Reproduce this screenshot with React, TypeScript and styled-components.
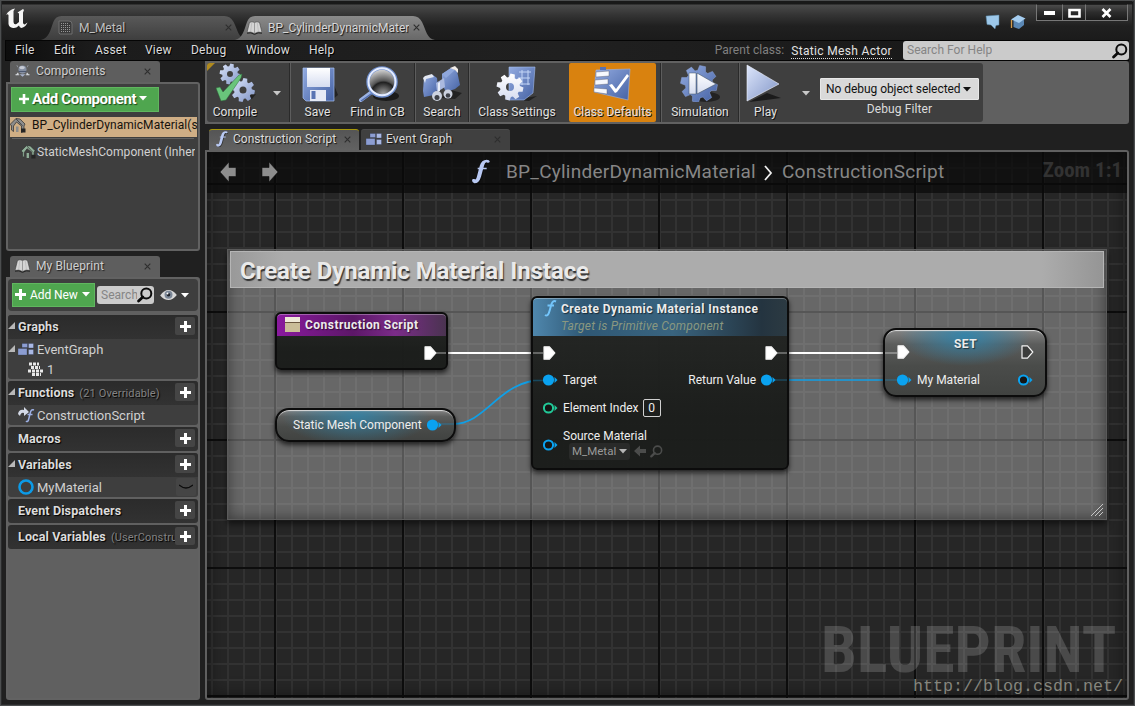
import React from "react";
import styled, { createGlobalStyle, css } from "styled-components";

const Global = createGlobalStyle`
  *, *::before, *::after { box-sizing: border-box; }
  html, body { margin: 0; padding: 0; background: #1f1f1f; }
  body { font-family: Roboto, "Liberation Sans", sans-serif; font-size: 12px; letter-spacing: 0.2px; color: #dcdcdc; overflow: hidden; }
  svg { display: block; flex: none; }
`;

/* ---------- window frame ---------- */

const Window = styled.div`
  width: 1135px;
  height: 706px;
  display: flex;
  flex-direction: column;
  background: #202020;
  border: 1px solid #4c4e4f;
  box-shadow: inset 0 0 0 1px #2b2c2d, inset 0 3px 2px #141414;
  padding: 0 5px 0 4px;
`;

const TitleBar = styled.header`
  height: 39px;
  flex: none;
  display: flex;
  margin: 0 -3px;
  background: linear-gradient(#191919 0 3px, #4a4a4a 4px, #343434 14px, #202020 25px, #1b1b1b 39px);
`;

const Logo = styled.div`
  width: 46px;
  padding: 6px 0 0 3px;
`;

const DocTabs = styled.div`
  display: flex;
  flex: 1;
  align-items: flex-end;
`;

const DocTab = styled.div<{ $active?: boolean }>`
  position: relative;
  width: ${(p) => (p.$active ? 200 : 203)}px;
  height: 24px;
  margin-right: -8px;
  margin-left: ${(p) => (p.$active ? "-1px" : "-7px")};
  display: flex;
  align-items: center;
  padding: 0 ${(p) => (p.$active ? 15 : 12)}px 1px ${(p) => (p.$active ? 12 : 17)}px;
  color: ${(p) => (p.$active ? "#d8d8d8" : "#c0c0c0")};
  text-shadow: 1px 1px 1px #111;
  z-index: ${(p) => (p.$active ? 2 : 1)};
`;

const TabShape = styled.svg`
  position: absolute;
  left: 0;
  top: 0;
  z-index: -1;
`;

const DocTabText = styled.span`
  flex: 1;
  overflow: hidden;
  white-space: nowrap;
  line-height: 18px;
  margin-left: 6px;
  margin-right: 4px;
  letter-spacing: 0;
`;

const TitleIcons = styled.div`
  display: flex;
  gap: 9px;
  padding: 13px 11px 0 0;
`;

const WindowButtons = styled.div`
  display: flex;
  height: 17px;
  margin-top: 3px;
  margin-right: 4px;
`;

const WindowButton = styled.button<{ $w: number }>`
  width: ${(p) => p.$w}px;
  height: 17px;
  padding: 0;
  display: flex;
  align-items: center;
  justify-content: center;
  background: linear-gradient(#4b4b4b, #2c2c2c 50%, #1a1a1a);
  border: 1px solid #777;
  margin-left: -1px;
  border-top-color: #222;
`;

const MenuBar = styled.nav`
  height: 21px;
  flex: none;
  display: flex;
  align-items: center;
  border: 1px solid #050505;
  border-right: 0;
  background: linear-gradient(90deg, #0d0d0d, #1c1c1c 8%, #202020 50%, #151515);
  padding-left: 9px;
`;

const MenuItem = styled.span<{ $w: number }>`
  width: ${(p) => p.$w}px;
  height: 19px;
  line-height: 18px;
  flex: none;
  text-shadow: 1px 1px 0 #000;
`;

const ParentClass = styled.span`
  margin-left: auto;
  height: 19px;
  line-height: 18px;
  color: #808080;
  letter-spacing: 0.05px;
`;

const ParentLink = styled.span`
  margin: 1px 11px 0 7px;
  line-height: 14px;
  color: #e2e2e2;
  border-bottom: 1px dotted #ddd;
  letter-spacing: 0.33px;
`;

const SearchBox = styled.div<{ $w: number; $h: number }>`
  width: ${(p) => p.$w}px;
  height: ${(p) => p.$h}px;
  flex: none;
  display: flex;
  align-items: center;
  justify-content: space-between;
  padding: 0 1px 0 4px;
  color: #858585;
  background: #cbcbcb;
  border-radius: 3px;
  overflow: hidden;
  letter-spacing: 0.03px;
`;

const SearchHint = styled.span`
  overflow: hidden;
  white-space: nowrap;
  padding-bottom: 1px;
`;

const Main = styled.main`
  display: flex;
  flex: 1;
  min-height: 0;
  padding: 0 0 5px 1px;
`;

/* ---------- side column ---------- */

const SideColumn = styled.aside`
  width: 194px;
  flex: none;
  display: flex;
  flex-direction: column;
  margin-right: 5px;
`;

const PanelTab = styled.div<{ $top?: number }>`
  width: 150px;
  height: 21px;
  margin: ${(p) => p.$top ?? 0}px 0 0 4px;
  flex: none;
  display: flex;
  align-items: center;
  padding: 0 9px 1px 5px;
  gap: 6px;
  background: #5e5e5e;
  border-radius: 3px 3px 0 0;
  color: #d0d0d0;
  text-shadow: 1px 1px 1px #222;
  letter-spacing: 0.1px;
`;

const Grow = styled.span`
  flex: 1;
`;

const Panel = styled.section<{ $h?: number; $fill?: string }>`
  ${(p) => (p.$h ? css`height: ${p.$h}px; flex: none;` : css`flex: 1;`)}
  display: flex;
  flex-direction: column;
  border: 2px solid #626262;
  border-radius: 0 3px 3px 3px;
  background: ${(p) => p.$fill ?? "#3e3e3e"};
  overflow: hidden;
`;

const AddComponent = styled.button`
  width: 148px;
  height: 25px;
  flex: none;
  margin: 3px 0 0 3px;
  padding: 0 0 2px 7px;
  display: flex;
  align-items: center;
  gap: 3px;
  background: #4fa64f;
  border: 1px solid #60b65f;
  color: #fff;
  font: bold 15px Roboto, sans-serif;
  letter-spacing: -0.35px;
  text-shadow: 1px 1px 1px #1c4a1c;
  white-space: nowrap;
`;

const TreeRow = styled.div<{ $selected?: boolean }>`
  height: 20px;
  flex: none;
  display: flex;
  align-items: center;
  white-space: nowrap;
  overflow: hidden;
  padding-bottom: ${(p) => (p.$selected ? 4 : 2)}px;
  margin: ${(p) => (p.$selected ? "5px 1px 0 2px" : "4px 3px 0 13px")};
  gap: ${(p) => (p.$selected ? 6 : 1)}px;
  background: ${(p) => (p.$selected ? "#cfae85" : "transparent")};
  color: ${(p) => (p.$selected ? "#16120d" : "#d2d2d2")};
  letter-spacing: ${(p) => (p.$selected ? "0.06px" : "0.08px")};
`;

const TreeDivider = styled.div`
  height: 1px;
  flex: none;
  margin: 1px 4px 0;
  background: #626262;
`;

const BlueprintTools = styled.div`
  height: 32px;
  flex: none;
  margin-bottom: 4px;
  display: flex;
  align-items: center;
  padding-left: 4px;
  background: #3e3e3e;
  border-radius: 4px;
`;

const AddNew = styled.button`
  width: 83px;
  height: 24px;
  margin-right: 2px;
  padding: 0 0 1px 2px;
  display: flex;
  align-items: center;
  gap: 4px;
  background: #4fa64f;
  border: 1px solid #60b65f;
  color: #fff;
  font: 12px Roboto, sans-serif;
  letter-spacing: -0.1px;
  white-space: nowrap;
`;

const Eye = styled.span`
  display: flex;
  align-items: center;
  gap: 4px;
  margin-left: 6px;
`;

const Category = styled.section`
  flex: none;
  margin-bottom: 2px;
  background: #3e3e3e;
  border-radius: 3px;
  overflow: hidden;
`;

const CategoryHead = styled.div`
  height: 24px;
  display: flex;
  align-items: center;
  background: linear-gradient(#2b2b2b, #323232);
  padding-right: 3px;
  padding-bottom: 2px;
  font-weight: bold;
  font-size: 12.5px;
  letter-spacing: 0.12px;
  color: #dcdcdc;
  text-shadow: 1px 1px 1px #000;
`;

const Toggle = styled.span`
  width: 10px;
  flex: none;
`;

const CategoryNote = styled.span`
  flex: 1;
  min-width: 0;
  overflow: hidden;
  white-space: nowrap;
  margin-left: 5px;
  font-weight: normal;
  font-size: 11px;
  letter-spacing: 0.13px;
  color: #838383;
  line-height: 16px;
  padding-top: 3px;
`;

const PlusButton = styled.span`
  width: 20px;
  height: 18px;
  flex: none;
  display: flex;
  align-items: center;
  justify-content: center;
  background: #454545;
  border-radius: 2px;
`;

const CategoryItem = styled.div<{ $h: number; $indent?: number }>`
  height: ${(p) => p.$h}px;
  display: flex;
  align-items: center;
  padding-left: ${(p) => p.$indent ?? 0}px;
  padding-right: 2px;
  font-size: 13px;
  letter-spacing: 0;
  color: #d0d0d0;
`;

const ItemIcon = styled.span`
  width: 19px;
  flex: none;
`;

/* ---------- editor column ---------- */

const Editor = styled.div`
  flex: 1;
  min-width: 0;
  display: flex;
  flex-direction: column;
`;

const ToolbarFrame = styled.div`
  height: 63px;
  flex: none;
  display: flex;
  border: 2px solid #616161;
  background: #606060;
  border-radius: 0 3px 3px 0;
`;

const Toolbar = styled.div`
  position: relative;
  width: 776px;
  display: flex;
  background: #3f3f3f;
  border-radius: 3px;
  overflow: hidden;
`;

const Corner = styled.svg`
  position: absolute;
  left: -1px;
  top: -1px;
`;

const Tool = styled.div<{ $w: number; $r?: number; $active?: boolean }>`
  width: ${(p) => p.$w}px;
  margin-right: ${(p) => p.$r ?? 0}px;
  flex: none;
  display: flex;
  flex-direction: column;
  align-items: center;
  background: ${(p) => (p.$active ? "#d9820f" : "transparent")};
  border-radius: 2px;
  color: #e2e2e2;
  text-shadow: 1px 1px 0 #111;
  white-space: nowrap;
  letter-spacing: 0.07px;
`;

const ToolLabel = styled.span`
  line-height: 16px;
  margin-top: 2px;
`;

const Divider = styled.div<{ $l?: number; $r?: number }>`
  width: 2px;
  flex: none;
  margin: 0 ${(p) => p.$r ?? 0}px 0 ${(p) => p.$l ?? 0}px;
  background: #5d5d5d;
  border-left: 1px solid #2a2a2a;
`;

const Drop = styled.div<{ $l: number; $r: number }>`
  padding-top: 28px;
  margin: 0 ${(p) => p.$r}px 0 ${(p) => p.$l}px;
`;

const DebugFilter = styled.div`
  display: flex;
  flex-direction: column;
  align-items: center;
  padding-top: 15px;
  letter-spacing: 0.1px;
`;

const DebugCaption = styled.span`
  line-height: 16px;
  margin-top: 1px;
`;

const DebugSelect = styled.div`
  width: 159px;
  height: 22px;
  display: flex;
  align-items: center;
  padding-left: 5px;
  gap: 2px;
  background: #d9d9d9;
  border: 1px solid #e8e8e8;
  border-radius: 1px;
  color: #111;
  white-space: nowrap;
  letter-spacing: -0.05px;
`;

const GraphTabs = styled.div`
  height: 21px;
  margin-top: 5px;
  flex: none;
  display: flex;
  gap: 2px;
  padding-left: 4px;
`;

const GraphTab = styled.div<{ $active?: boolean; $w: number }>`
  width: ${(p) => p.$w}px;
  display: flex;
  align-items: center;
  padding: 0 9px 2px 5px;
  gap: 4px;
  border-top: 1px solid ${(p) => (p.$active ? "#a8980a" : "#4a4a4a")};
  border-radius: 3px 3px 0 0;
  background: ${(p) => (p.$active ? "linear-gradient(#555, #626262)" : "#404040")};
  letter-spacing: ${(p) => (p.$active ? "0.02px" : "0.2px")};
  text-shadow: 1px 1px 1px #111;
  white-space: nowrap;
`;

const Graph = styled.section`
  position: relative;
  flex: 1;
  border: 2px solid #606060;
  border-radius: 0 3px 3px 3px;
  overflow: hidden;
  background-color: #262626;
  background-image:
    linear-gradient(90deg, #0d0d0d 2px, transparent 2px),
    linear-gradient(#0d0d0d 2px, transparent 2px),
    linear-gradient(90deg, #323232 2px, transparent 2px),
    linear-gradient(#323232 2px, transparent 2px);
  background-size: 128px 128px, 128px 128px, 16px 16px, 16px 16px;
  background-position: 67px 31px, 67px 31px, 4px 15px, 4px 15px;
`;

const Vignette = styled.div`
  position: absolute;
  inset: 0;
  box-shadow: inset 0 0 18px #0008;
  pointer-events: none;
`;

const GraphHeader = styled.div`
  position: relative;
  height: 41px;
  display: flex;
  align-items: center;
  padding: 0 5px 2px 12px;
  background: #0a0a0ab8;
  z-index: 2;
`;

const NavArrows = styled.div`
  display: flex;
  gap: 24px;
  width: 253px;
`;

const Crumb = styled.span`
  font-size: 19px;
  line-height: 22px;
  letter-spacing: 0.25px;
  color: #868686;
  white-space: nowrap;
`;

const ZoomText = styled.span`
  margin-left: auto;
  margin-top: -3px;
  font-size: 21px;
  line-height: 24px;
  font-weight: bold;
  font-stretch: condensed;
  letter-spacing: 0;
  color: #323232;
  white-space: nowrap;
`;

/* ---------- graph canvas ---------- */

const CommentBox = styled.div`
  position: absolute;
  left: 20px;
  top: 97px;
  width: 880px;
  height: 271px;
  padding: 2px;
  background: #ffffff4d;
  box-shadow: inset 0 0 14px #0007, 0 4px 6px #0008;
  border: 1px solid #5b5b5b;
`;

const CommentTitle = styled.div`
  height: 37px;
  margin-top: -1px;
  padding: 0 0 0 9px;
  line-height: 39px;
  font-size: 24px;
  font-weight: bold;
  letter-spacing: -0.07px;
  color: #eaeaea;
  text-shadow: 1px 2px 1px #333;
  background: linear-gradient(90deg, #999, #acacac 6%, #acacac 93%, #959595);
  border: 1px solid #b5b5b5;
`;

const Resize = styled.svg`
  position: absolute;
  right: 2px;
  bottom: 2px;
`;

const Wires = styled.svg`
  position: absolute;
  left: 0;
  top: 0;
`;

const Node = styled.div<{ $x: number; $y: number; $w: number; $h: number; $round?: number }>`
  position: absolute;
  left: ${(p) => p.$x}px;
  top: ${(p) => p.$y}px;
  width: ${(p) => p.$w}px;
  height: ${(p) => p.$h}px;
  border: 2px solid #0c0c0c;
  border-radius: ${(p) => p.$round ?? 6}px;
  background: linear-gradient(#232523f2, #191b19f5 70%);
  box-shadow: 0 3px 5px #000a;
  overflow: hidden;
  color: #eee;
`;

const GlossNode = styled(Node)<{ $glow: string }>`
  background:
    ${(p) => p.$glow},
    linear-gradient(#858585, #5c5d5c 22%, #4a4c4a 55%, #414341);
  box-shadow: inset 0 2px 1px -1px #ddd, 0 3px 5px #000a;
`;

const NodeHead = styled.div<{ $h: number; $bg: string }>`
  height: ${(p) => p.$h}px;
  display: flex;
  background: ${(p) => p.$bg};
  box-shadow: inset 0 1px 0 #ffffff50;
  border-radius: 4px 4px 0 0;
`;

const NodeTitle = styled.span`
  font-weight: bold;
  line-height: 22px;
  font-size: 12px;
  letter-spacing: 0.47px;
  color: #ececec;
  white-space: nowrap;
  text-shadow: 1px 1px 1px #0008;
`;

const NodeSub = styled.div`
  font-style: italic;
  line-height: 14px;
  margin-top: -1px;
  letter-spacing: 0.2px;
  color: #8a9880;
`;

const NodeTitles = styled.div`
  display: flex;
  flex-direction: column;
`;

const Pins = styled.div<{ $h: number; $l?: number; $r?: number }>`
  height: ${(p) => p.$h}px;
  display: flex;
  align-items: center;
  justify-content: space-between;
  padding: 0 ${(p) => p.$r ?? 10}px 0 ${(p) => p.$l ?? 10}px;
  white-space: nowrap;
  letter-spacing: 0;
`;

const SetHead = styled(Pins)`
  & > span {
    margin-bottom: 17px;
  }
`;

const PinGroup = styled.span`
  display: flex;
  align-items: center;
  gap: 5px;
`;

const IndexValue = styled.span`
  width: 18px;
  height: 18px;
  margin-left: -1px;
  border: 1px solid #d0d0d0;
  border-radius: 2px;
  line-height: 16px;
  text-align: center;
`;

const AssetPicker = styled.span`
  display: flex;
  align-items: center;
  gap: 4px;
  margin: -1px 0 0 6px;
`;

const AssetValue = styled.span`
  display: flex;
  align-items: center;
  gap: 3px;
  width: 61px;
  height: 17px;
  padding-left: 3px;
  font-size: 11.5px;
  background: #292a29;
  border-radius: 3px;
  color: #9a9a9a;
`;

const SourcePin = styled.div`
  display: flex;
  flex-direction: column;
  line-height: 16px;
  margin-top: -2px;
`;

const Watermark = styled.div`
  position: absolute;
  right: 11px;
  bottom: 9px;
  font-size: 65px;
  line-height: 78px;
  font-weight: bold;
  font-stretch: condensed;
  color: #ffffff2b;
  transform: scaleX(0.983);
  transform-origin: right;
  letter-spacing: 0;
`;

const SiteUrl = styled.div`
  position: absolute;
  right: 4px;
  bottom: -1px;
  font: 16.67px/24px "Liberation Mono", monospace;
  letter-spacing: 0;
  color: #85857d;
`;

/* ---------- icons ---------- */

const Cross = ({ c = "#2e2e2e" }: { c?: string }) => (
  <svg width="7" height="7" viewBox="0 0 7 7"><path d="M.7.7 6.3 6.3M6.3.7.7 6.3" stroke={c} strokeWidth="1.1" /></svg>
);
const Caret = ({ c = "#fff", w = 8 }: { c?: string; w?: number }) => (
  <svg width={w} height={w / 2 + 1} viewBox="0 0 8 5"><path d="M0 0h8L4 4.5z" fill={c} /></svg>
);
const Plus = ({ s = 11, t = 3 }: { s?: number; t?: number }) => (
  <svg width={s} height={s} viewBox={`0 0 ${s} ${s}`}><path d={`M${s / 2} 0v${s}M0 ${s / 2}h${s}`} stroke="#fff" strokeWidth={t} /></svg>
);
const Magnifier = ({ c = "#0b0b0b", s = 16 }: { c?: string; s?: number }) => (
  <svg width={s} height={s} viewBox="0 0 16 16"><circle cx="9.3" cy="6.4" r="5" fill="none" stroke={c} strokeWidth="2" /><path d="M5.8 10 1.6 14" stroke={c} strokeWidth="2.8" strokeLinecap="round" /></svg>
);
const Expander = () => (
  <svg width="8" height="8" viewBox="0 0 8 8"><path d="M7 0v7H0z" fill="#b8b8b8" /></svg>
);
const Book = () => (
  <svg width="15" height="14" viewBox="0 0 15 14"><path d="M2.5 1.5Q5 0 7.5 1.5 10 0 12.5 1.5L15 11.5Q11 10 7.5 12.5 4 10 0 11.5z" fill="#d4d4d4" stroke="#333" strokeWidth=".5" /><path d="M7.500 2v10" stroke="#8a8a8a" strokeWidth=".8" /><path d="M4.8 1.5 3.7 10M10.2 1.5 11.4 10" stroke="#b0b0b0" strokeWidth=".6" /><path d="M0 12.2Q4 11 7.5 13.4 11 11 15 12.2" stroke="#222" fill="none" /></svg>
);
const MaterialIcon = () => (
  <svg width="15" height="16" viewBox="0 0 15 16"><path d="M1 1h10q3 0 3 3v10H2l-1-1z" fill="#3a3a3a" stroke="#6f6f6f" /><path d="M3 3.500h8M3 5.500h10M3 7.500h10M3 9.500h10M3 11.500h10" stroke="#989898" strokeDasharray="1 1" /></svg>
);
const ComponentsIcon = () => (
  <svg width="15" height="14" viewBox="0 0 16 14"><circle cx="8" cy="5.500" r="4.300" fill="#8690a3" /><path d="M3 3 2 .8M13 3 14 .8" stroke="#8f949c" /><path d="M3.500 9 1.500 11.500M12.500 9 14.500 11.500M.5 11h4M11.500 11h4" stroke="#d4d7dd" strokeWidth="1.300" /><ellipse cx="7.500" cy="3.300" rx="3" ry="1.700" fill="#c6cbd5" /><path d="M5 10.500 8 13l3-2.500z" fill="#a6b2cc" /><path d="M4 7.500h8" stroke="#46536c" /></svg>
);
const House = ({ c, s = 16 }: { c: string; s?: number }) => (
  <svg width={s} height={s - 1} viewBox="0 0 16 15"><path d="M0 6.5 6 .5l4 .5 5 5-1 2v5l-2.500 1.500V8L6.500 4 3.500 8v5.500L1.500 12V7.500z" fill={c} stroke="#2c2c2c" strokeWidth=".7" /><path d="m6 .8 6.500 7" stroke="#333" strokeWidth=".8" /><path d="M6 8.500h2.500v5.500H6z" fill={c} /><path d="M11 10.500h4.500v4H11z" fill="#252525" /></svg>
);
const GraphIcon = () => (
  <svg width="16" height="13" viewBox="0 0 16 13"><g stroke="#26304a" strokeWidth=".3"><path d="M4 .5h5.500v4H4zM0 5.500h9v6.500H0z" fill="#8c9dd2" /><path d="M10.500.5h5v4.500h-5zM10.500 6.500h5v5h-5z" fill="#a9b8e4" /></g></svg>
);
const NodesIcon = () => (
  <svg width="15" height="15" viewBox="0 0 15 15"><path d="M1 2h10M3 5.500h9M0 9h15M4 12.500h9" stroke="#e8e8e8" strokeWidth="2.800" strokeDasharray="3 1" /></svg>
);
const EyeIcon = () => (
  <svg width="17" height="12" viewBox="0 0 17 12"><path d="M.2 6.500Q4 1 8.500 1t8.300 5Q13 11 8.500 11T.2 6.500z" fill="#d8d8d8" /><circle cx="8.500" cy="5.800" r="4" fill="#7b8797" /><circle cx="8.500" cy="5.800" r="1.800" fill="#20242c" /><circle cx="7.500" cy="4.500" r="1" fill="#fff" /></svg>
);

const FIcon = ({ w, h, c = "#b9c9f3" }: { w: number; h: number; c?: string }) => (
  <svg width={w} height={h} viewBox="0 0 19 26">
    <path d="M1 23.500q5 2.500 7-5L11.500 6Q13 .5 18 2.500" fill="none" stroke="#0c0c0c" strokeWidth="3" transform="translate(1 1)" opacity=".6" />
    <path d="M0 22q.5-1.500 2.500-1 1.500 1.500 2.500-2L8.200 7Q10 .5 15.500.5q3 .2 3.300 2-.6 1.700-2.500 1.200-2.200-1.500-3.500 2.800L9.500 18.500Q7.500 25.500 2.500 25.500 0 25 0 22z" fill={c} />
    <path d="M6 9.800h9.500" stroke={c} strokeWidth="1.600" />
  </svg>
);

const TabIcon = styled.span`
  width: 16px;
  margin-right: 1px;
  padding-left: 2px;
`;

const CrumbIcon = styled.span`
  width: 34px;
`;

const gearPath = (cx: number, cy: number, r: number, n = 8) => {
  const pts: string[] = [];
  for (let i = 0; i < n; i++) {
    const a = (i / n) * Math.PI * 2 + 0.2;
    const w = Math.PI / n;
    [[-0.75, 0.74], [-0.42, 1], [0.42, 1], [0.75, 0.74]].forEach(([d, k]) => {
      pts.push(`${(cx + Math.cos(a + d * w) * r * k).toFixed(2)} ${(cy + Math.sin(a + d * w) * r * k).toFixed(2)}`);
    });
  }
  return `M${pts.join("L")}Z`;
};

const Defs = () => (
  <defs>
    <linearGradient id="steel" x1="0" y1="0" x2="1" y2="1"><stop offset="0" stopColor="#dde6fb" /><stop offset="1" stopColor="#8094c6" /></linearGradient>
    <linearGradient id="blue" x1="0" y1="0" x2="1" y2="1"><stop offset="0" stopColor="#93abe0" /><stop offset="1" stopColor="#4562a4" /></linearGradient>
    <linearGradient id="paper" x1="0" y1="0" x2="0" y2="1"><stop offset="0" stopColor="#fff" /><stop offset="1" stopColor="#d5dcf0" /></linearGradient>
    <radialGradient id="lens" cx=".55" cy=".95" r="1"><stop offset="0" stopColor="#aaa" /><stop offset=".44" stopColor="#202020" /><stop offset=".5" stopColor="#555" /><stop offset="1" stopColor="#f4f4f4" /></radialGradient>
  </defs>
);

const Art = ({ children }: { children: React.ReactNode }) => (
  <svg width="42" height="39" viewBox="0 0 42 39"><Defs />{children}</svg>
);
const CompileArt = () => (
  <Art>
    <path d="M24 34 38 36 42 31z" fill="#222" />
    <path fillRule="evenodd" d={gearPath(16, 11, 10.5) + "M19 11a3 3 0 1 0-6 0a3 3 0 1 0 6 0Z"} fill="url(#steel)" />
    <path fillRule="evenodd" d={gearPath(29, 27, 12) + "M32.500 27a3.500 3.500 0 1 0-7 0a3.500 3.500 0 1 0 7 0Z"} fill="url(#steel)" />
    <path d="m2 25 4-1 3 5L25 12l3-1-1 4L12 37l-5 1z" fill="#69c47b" stroke="#2c6c3a" strokeWidth=".5" />
  </Art>
);
const SaveArt = () => (
  <Art><path d="M36 36 41 32 37 22z" fill="#222" /><path d="M6 5h31v33H9l-3-3z" fill="url(#blue)" stroke="#a8c0f0" strokeWidth=".7" /><path d="M10 5h23v19H10z" fill="url(#paper)" /><path d="M13 27h16v11H13z" fill="#e6eaf5" /><path d="M14.500 28h4v8h-4z" fill="#5a75b3" /></Art>
);
const FindArt = () => (
  <Art><ellipse cx="29" cy="33" rx="13" ry="5" fill="#1b1b1b" /><path d="M16 28 4 37" stroke="#9bb2e2" strokeWidth="4" strokeLinecap="round" /><path d="m4 38 13-9" stroke="#526eaf" strokeWidth="1.500" /><circle cx="25" cy="19" r="14" fill="url(#lens)" stroke="#6e8dcb" strokeWidth="3.500" /><circle cx="25" cy="18.700" r="13.500" fill="none" stroke="#e6edff" strokeWidth="2" /></Art>
);
const BinocularArt = () => (
  <Art><path d="M20 35 34 36 41 30 30 27z" fill="#222" /><path d="m3 14 9-2 4 3 1 10-4 7-10 2-1-6z" fill="url(#blue)" /><path d="m2 15 2-2 7-2 2 3-8 2-1 4z" fill="#e4e8f2" /><path d="m21 11 9-6 6 3 3 14-5 4-9 3-4-8z" fill="url(#blue)" /><path d="m21 11 9-6 4 2-9 8z" fill="#8fa7dc" /><path d="m29 5 5-2 3 3v4l-3-3z" fill="#f1ece8" /><path d="m15 20 8-5 1 9-8 5z" fill="#aab9df" /><path d="m17 20 2-1v9l-2 1z" fill="#e8edf8" /><circle cx="16" cy="33" r="5" fill="#ccd2df" /><circle cx="16" cy="34.500" r="2.500" fill="#3e4148" /><circle cx="27" cy="31" r="4.500" fill="#ccd2df" /><circle cx="27" cy="32.500" r="2.300" fill="#3e4148" /></Art>
);
const SettingsArt = () => (
  <Art><path d="M17 37 33 38 41 33z" fill="#222" /><path d="m13 4 26 0-2 26-9 7-15 0z" fill="url(#blue)" stroke="#a2bced" strokeWidth=".6" /><path d="M23 9h12M22 15h12M20 21h14M26 7v15M32 7v15" stroke="#c3d5f6" /><path fillRule="evenodd" d={gearPath(14, 24, 13.500) + "M18 24a4 4 0 1 0-8 0a4 4 0 1 0 8 0Z"} fill="url(#paper)" /></Art>
);
const DefaultsArt = () => (
  <Art><path d="m4 7 34-1-2 31-34-8z" fill="url(#blue)" stroke="#9cb2e0" strokeWidth=".6" /><path d="M8 4h6v3H8z" fill="#5671b3" /><path d="m4 9 13-1v5L4 14zM3 17l13-1v5L3 22zM2 25l13 1v5L2 29z" fill="#f6f8fd" stroke="#556" strokeWidth=".4" /><path d="m17 22 3-1 4 5 11-15 2 2-12 16-2 1z" fill="#fff" /></Art>
);
const SimulationArt = () => (
  <Art><ellipse cx="27" cy="34" rx="14" ry="5" fill="#222" /><path d={gearPath(20, 21, 18.500)} fill="url(#blue)" stroke="#8da5da" strokeWidth=".5" /><path d="M10 10h7v21h-7z" fill="url(#paper)" stroke="#456" strokeWidth=".5" /><path d="m18 10 19 11-19 10z" fill="url(#paper)" stroke="#456" strokeWidth=".6" /></Art>
);
const PlayArt = () => (
  <Art><path d="M4 39 36 35 22 30z" fill="#1b1b1b" /><path d="m2 2 32 19L2 38z" fill="url(#steel)" stroke="#f2f5ff" strokeWidth=".6" /></Art>
);

const ExecPin = ({ hollow }: { hollow?: boolean }) => (
  <svg width="13" height="14" viewBox="0 0 13 14"><path d="M1 .8h5.500L11.800 7 6.500 13.200H1z" fill={hollow ? "#3c3d3c" : "#fff"} stroke="#f3f3f3" strokeLinejoin="round" strokeWidth="1.200" /></svg>
);
const DataPin = ({ c = "#0aa2f0", hollow }: { c?: string; hollow?: boolean }) => (
  <svg width="15" height="12" viewBox="0 0 15 12"><path d="m11.500 3 3 3-3 3z" fill={c} /><circle cx="5.500" cy="6" r={hollow ? 4.600 : 5.600} fill={hollow ? "#151615" : c} stroke={c} strokeWidth={hollow ? 2 : 0} /></svg>
);
const NavArrow = ({ flip }: { flip?: boolean }) => (
  <svg width="18" height="22" viewBox="0 0 18 22"><path transform={flip ? "translate(18 0) scale(-1 1)" : undefined} d="M1 11 10 1v5.500h7v9h-7V21z" fill="#8d8d8d" stroke="#111" strokeWidth=".6" /></svg>
);

const docShape = "M0 24C8 22 9 14 12 6Q14 0 20 0H178Q184 0 187 6C191 14 192 23 200 24Z";
const DocShape = ({ active }: { active?: boolean }) => (
  <TabShape width={active ? 200 : 206} height="24" viewBox="0 0 200 24" preserveAspectRatio="none">
    <defs><linearGradient id={active ? "ta" : "tb"} x1="0" y1="0" x2="0" y2="1"><stop offset="0" stopColor={active ? "#8a8a8a" : "#595959"} /><stop offset="1" stopColor={active ? "#686868" : "#3e3e3e"} /></linearGradient></defs>
    <path d={docShape} fill={`url(#${active ? "ta" : "tb"})`} />
  </TabShape>
);

const menu: [string, number][] = [["File", 39], ["Edit", 41], ["Asset", 50], ["View", 46], ["Debug", 55], ["Window", 63], ["Help", 40]];

const Head = ({ name, note, open }: { name: string; note?: string; open?: boolean }) => (
  <CategoryHead>
    <Toggle>{open && <Expander />}</Toggle>
    {name}
    <CategoryNote>{note}</CategoryNote>
    <PlusButton><Plus /></PlusButton>
  </CategoryHead>
);

export default function App() {
  return (
    <>
      <Global />
      <Window>
        <TitleBar>
          <Logo>
            <svg width="24" height="22" viewBox="0 0 24 22"><path d="M1 8Q4 2.500 10 1.500L8.500 4v11q.3 3 3 2l2.500-2V6.500L12.500 5.500 18 2l1 1-1 2.500v10.500q1 2.500 3 .5l1.500-1q-2 4.500-6 5.500-2-.5-2.500-2.500-3 3-6 2.500-4-.5-4.500-4V8Q2.500 6.500 1 8z" fill="#f5f5f5" /></svg>
          </Logo>
          <DocTabs>
            <DocTab>
              <DocShape />
              <MaterialIcon />
              <DocTabText>M_Metal</DocTabText>
              <Cross />
            </DocTab>
            <DocTab $active>
              <DocShape active />
              <Book />
              <DocTabText>BP_CylinderDynamicMaterial</DocTabText>
              <Cross />
            </DocTab>
          </DocTabs>
          <TitleIcons>
            <svg width="16" height="16" viewBox="0 0 16 16"><path d="M1 2 14 1v10l-3 .5-1 3.500-4-4-4-.5z" fill="#9dc8ea" stroke="#55809f" strokeWidth=".5" /></svg>
            <svg width="16" height="16" viewBox="0 0 16 16"><path d="M3.500 7v6L9 15l5-4V6z" fill="#5b88b5" /><path d="M1 5.500 8 1l7.500 3.500L9 9z" fill="#a5cdf0" /><path d="M1.500 6v8" stroke="#d29b4d" strokeWidth="1.300" /></svg>
          </TitleIcons>
          <WindowButtons>
            <WindowButton $w={27}><svg width="11" height="4" viewBox="0 0 11 4"><path d="M0 0h11v4H0z" fill="#fff" /></svg></WindowButton>
            <WindowButton $w={24}><svg width="13" height="10" viewBox="0 0 13 10"><path d="M1.500 2h10v6.500h-10z" fill="none" stroke="#fff" strokeWidth="2.600" /></svg></WindowButton>
            <WindowButton $w={43}><svg width="11" height="10" viewBox="0 0 11 10"><path d="m1.500 1 8 8m0-8-8 8" stroke="#fff" strokeWidth="2.600" /></svg></WindowButton>
          </WindowButtons>
        </TitleBar>

        <MenuBar>
          {menu.map(([name, w]) => <MenuItem key={name} $w={w}>{name}</MenuItem>)}
          <ParentClass>Parent class:</ParentClass>
          <ParentLink>Static Mesh Actor</ParentLink>
          <SearchBox $w={226} $h={19}><SearchHint>Search For Help</SearchHint><Magnifier /></SearchBox>
        </MenuBar>

        <Main>
          <SideColumn>
            <PanelTab><ComponentsIcon />Components<Grow /><Cross /></PanelTab>
            <Panel $h={169}>
              <AddComponent><Plus s={10} t={2.6} />Add Component<Caret /></AddComponent>
              <TreeRow $selected><House c="#8c8c8c" />BP_CylinderDynamicMaterial(self)</TreeRow>
              <TreeDivider />
              <TreeRow><House c="#8faf98" s={15} />StaticMeshComponent (Inherited)</TreeRow>
            </Panel>

            <PanelTab $top={5}><Book />My Blueprint<Grow /><Cross /></PanelTab>
            <Panel $fill="#606060">
              <BlueprintTools>
                <AddNew><Plus />Add New<Caret /></AddNew>
                <SearchBox $w={57} $h={18}><SearchHint>Search</SearchHint><Magnifier /></SearchBox>
                <Eye><EyeIcon /><Caret /></Eye>
              </BlueprintTools>
              <Category>
                <Head name="Graphs" open />
                <CategoryItem $h={20}><Toggle><Expander /></Toggle><ItemIcon><GraphIcon /></ItemIcon>EventGraph</CategoryItem>
                <CategoryItem $h={20} $indent={20}><ItemIcon><NodesIcon /></ItemIcon>1</CategoryItem>
              </Category>
              <Category>
                <Head name="Functions" note="(21 Overridable)" open />
                <CategoryItem $h={20} $indent={10}>
                  <ItemIcon><svg width="17" height="16" viewBox="0 0 17 16"><path d="M0 7Q1 2 6 3V0l5 5-5 4V6Q3 5 2 9z" fill="#d3d9e6" /><path d="M8 14q2 2 3-3l1.500-6Q13.500 2 16 3M9.500 7.500h5" fill="none" stroke="#9db0e4" strokeWidth="1.500" /></svg></ItemIcon>
                  ConstructionScript
                </CategoryItem>
              </Category>
              <Category><Head name="Macros" /></Category>
              <Category>
                <Head name="Variables" open />
                <CategoryItem $h={20} $indent={10}>
                  <ItemIcon><svg width="16" height="16" viewBox="0 0 16 16"><circle cx="8" cy="8" r="6.500" fill="none" stroke="#0c9be8" strokeWidth="2.600" /></svg></ItemIcon>
                  MyMaterial<Grow />
                  <PlusButton><svg width="14" height="6" viewBox="0 0 14 6"><path d="M0 1q7 6 14 0" fill="none" stroke="#0c0c0c" strokeWidth="1.300" /></svg></PlusButton>
                </CategoryItem>
              </Category>
              <Category><Head name="Event Dispatchers" /></Category>
              <Category><Head name="Local Variables" note="(UserConstructionScript)" /></Category>
            </Panel>
          </SideColumn>

          <Editor>
            <ToolbarFrame>
              <Toolbar>
                <Corner width="10" height="10" viewBox="0 0 10 10"><path d="M0 0h10L0 10z" fill="#b08a1e" /></Corner>
                <Tool $w={56}><CompileArt /><ToolLabel>Compile</ToolLabel></Tool>
                <Drop $l={10} $r={8}><Caret c="#c8c8c8" /></Drop>
                <Divider $r={3} />
                <Tool $w={47}><SaveArt /><ToolLabel>Save</ToolLabel></Tool>
                <Tool $w={73}><FindArt /><ToolLabel>Find in CB</ToolLabel></Tool>
                <Divider />
                <Tool $w={52}><BinocularArt /><ToolLabel>Search</ToolLabel></Tool>
                <Divider />
                <Tool $w={94} $r={5}><SettingsArt /><ToolLabel>Class Settings</ToolLabel></Tool>
                <Tool $w={87} $active><DefaultsArt /><ToolLabel>Class Defaults</ToolLabel></Tool>
                <Divider $l={4} />
                <Tool $w={76}><SimulationArt /><ToolLabel>Simulation</ToolLabel></Tool>
                <Divider />
                <Tool $w={51}><PlayArt /><ToolLabel>Play</ToolLabel></Tool>
                <Drop $l={11} $r={10}><Caret c="#c8c8c8" /></Drop>
                <DebugFilter>
                  <DebugSelect>No debug object selected<Caret c="#111" /></DebugSelect>
                  <DebugCaption>Debug Filter</DebugCaption>
                </DebugFilter>
              </Toolbar>
            </ToolbarFrame>

            <GraphTabs>
              <GraphTab $active $w={150}><TabIcon><FIcon w={12} h={16} /></TabIcon>Construction Script<Grow /><Cross /></GraphTab>
              <GraphTab $w={149}><GraphIcon />Event Graph<Grow /><Cross /></GraphTab>
            </GraphTabs>

            <Graph>
              <CommentBox>
                <CommentTitle>Create Dynamic Material Instace</CommentTitle>
                <Resize width="14" height="14" viewBox="0 0 14 14"><path d="M1 13 13 1M5 13l8-8M9 13l4-4" stroke="#c6c6c6" /></Resize>
              </CommentBox>

              <Watermark>BLUEPRINT</Watermark>
              <Vignette />

              <Wires width="920" height="546" viewBox="0 0 920 546" fill="none">
                <path d="M238 201H326M580 201H690" stroke="#fff" strokeWidth="2.200" />
                <path d="M246 272C280 272 292 228 336 228" stroke="#109fe6" strokeWidth="1.800" />
                <path d="M580 228H690" stroke="#109fe6" strokeWidth="1.600" />
              </Wires>

              <Node $x={68} $y={160} $w={173} $h={58}>
                <NodeHead $h={22} $bg="linear-gradient(90deg, #8a1a9e, #5c1768 45%, #7b2c89 70%, #4a3350)">
                  <svg width="28" height="22" viewBox="0 0 28 22"><path d="M8 3h15v15H8z" fill="#cabd98" /><path d="M8 3h15v5H8z" fill="#efe9d8" /><path d="M8 8.500h15" stroke="#6a5640" /></svg>
                  <NodeTitle>Construction Script</NodeTitle>
                </NodeHead>
                <Pins $h={33} $r={9}><span /><ExecPin /></Pins>
              </Node>

              <GlossNode $x={68} $y={256} $w={181} $h={34} $round={14} $glow="radial-gradient(ellipse 75px 30px at 45% 20%, #2f86adcc, #2f86ad00)">
                <Pins $h={30} $l={16} $r={12}>Static Mesh Component<DataPin /></Pins>
              </GlossNode>

              <Node $x={324} $y={144} $w={258} $h={174}>
                <NodeHead $h={38} $bg="linear-gradient(90deg, #4f87ad, #2f5875 20%, #39647f 55%, #243440 90%, #2c3a42)">
                  <svg width="28" height="20" viewBox="0 0 28 20"><path d="M12 17q3 2 4.500-4l2-7Q20 2 23 3.500M14.500 7.500h6.500" fill="none" stroke="#73c5fb" strokeWidth="2" /></svg>
                  <NodeTitles>
                    <NodeTitle>Create Dynamic Material Instance</NodeTitle>
                    <NodeSub>Target is Primitive Component</NodeSub>
                  </NodeTitles>
                </NodeHead>
                <Pins $h={34} $r={9}><ExecPin /><ExecPin /></Pins>
                <Pins $h={20} $r={11}>
                  <PinGroup><DataPin />Target</PinGroup>
                  <PinGroup>Return Value<DataPin /></PinGroup>
                </Pins>
                <Pins $h={36}><PinGroup><DataPin c="#22c998" hollow />Element Index<IndexValue>0</IndexValue></PinGroup></Pins>
                <Pins $h={37}>
                  <PinGroup>
                    <DataPin hollow />
                    <SourcePin>
                      Source Material
                      <AssetPicker>
                        <AssetValue>M_Metal<Caret c="#b5b5b5" /></AssetValue>
                        <svg width="12" height="12" viewBox="0 0 12 12"><path d="m0 6 6-5.500V4h6v4H6v3.500z" fill="#4b4c4b" /></svg>
                        <Magnifier c="#4b4c4b" s={13} />
                      </AssetPicker>
                    </SourcePin>
                  </PinGroup>
                </Pins>
              </Node>

              <GlossNode $x={676} $y={176} $w={164} $h={69} $round={13} $glow="radial-gradient(ellipse 66px 30px at 50% 6px, #2b85b0dd, #2b85b000)">
                <SetHead $h={44} $l={12} $r={11}>
                  <ExecPin /><NodeTitle>SET</NodeTitle><ExecPin hollow />
                </SetHead>
                <Pins $h={11} $l={12} $r={12}>
                  <PinGroup><DataPin />My Material</PinGroup><DataPin hollow />
                </Pins>
              </GlossNode>

              <Wires width="920" height="546" viewBox="0 0 920 546" fill="none" opacity="0.3">
                <path d="M228 201H239M326 201H336M570 201H580M678 201H690" stroke="#fff" strokeWidth="2" />
                <path d="M232 272H247M326 228.500H337M568 228H580M678 228H690" stroke="#109fe6" strokeWidth="1.600" />
              </Wires>

              <SiteUrl>http://blog.csdn.net/</SiteUrl>

              <GraphHeader>
                <NavArrows><NavArrow /><NavArrow flip /></NavArrows>
                <CrumbIcon><FIcon w={18} h={25} /></CrumbIcon>
                <Crumb>BP_CylinderDynamicMaterial</Crumb>
                <svg width="26" height="20" viewBox="0 0 26 20"><path d="m9 4 6 7-6 7" fill="none" stroke="#eee" strokeWidth="1.800" /></svg>
                <Crumb>ConstructionScript</Crumb>
                <ZoomText>Zoom 1:1</ZoomText>
              </GraphHeader>
            </Graph>
          </Editor>
        </Main>
      </Window>
    </>
  );
}
